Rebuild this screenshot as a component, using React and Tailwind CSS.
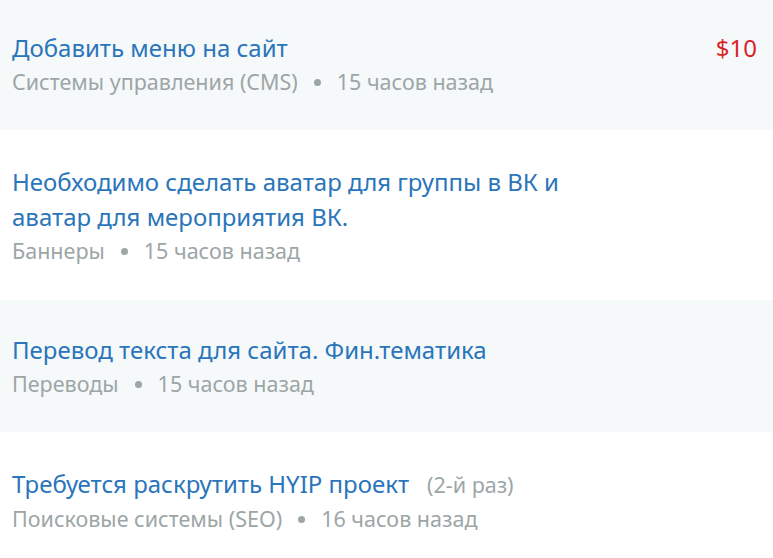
const tasks = [
  {
    title: "Добавить меню на сайт",
    category: "Системы управления (CMS)",
    time: "15 часов назад",
    price: "$10",
  },
  {
    title: "Необходимо сделать аватар для группы в ВК и аватар для мероприятия ВК.",
    category: "Баннеры",
    time: "15 часов назад",
  },
  {
    title: "Перевод текста для сайта. Фин.тематика",
    category: "Переводы",
    time: "15 часов назад",
  },
  {
    title: "Требуется раскрутить HYIP проект",
    note: "(2-й раз)",
    category: "Поисковые системы (SEO)",
    time: "16 часов назад",
  },
];

export default function App() {
  return (
    <div className="w-[773px] h-[558px] overflow-hidden bg-white font-['Noto_Sans',sans-serif]">
      <div className="-mt-[2px]">
        {tasks.map((task, i) => (
          <div
            key={i}
            className={
              i % 2 === 0
                ? "flex items-start justify-between bg-[#f6f9fa] pl-[12px] pr-[16px] pt-[32px] pb-[31px]"
                : "flex items-start justify-between bg-white pl-[12px] pr-[16px] pt-[34px] pb-[32px]"
            }
          >
            <div className="max-w-[585px]">
              <div className="text-[24px] leading-[35px] text-[#2a75bb]">
                {task.title}
                {task.note && (
                  <span className="ml-[18px] text-[21.5px] text-[#9ca6a6]">{task.note}</span>
                )}
              </div>
              <div className="flex items-center text-[21.5px] leading-[34px] text-[#9ca6a6]">
                <span>{task.category}</span>
                <span className="mx-[16px] w-[7px] h-[7px] rounded-full bg-[#9ca6a6]" />
                <span>{task.time}</span>
              </div>
            </div>
            {task.price && (
              <div className="text-[24px] leading-[35px] text-[#d8232a]">{task.price}</div>
            )}
          </div>
        ))}
      </div>
    </div>
  );
}
